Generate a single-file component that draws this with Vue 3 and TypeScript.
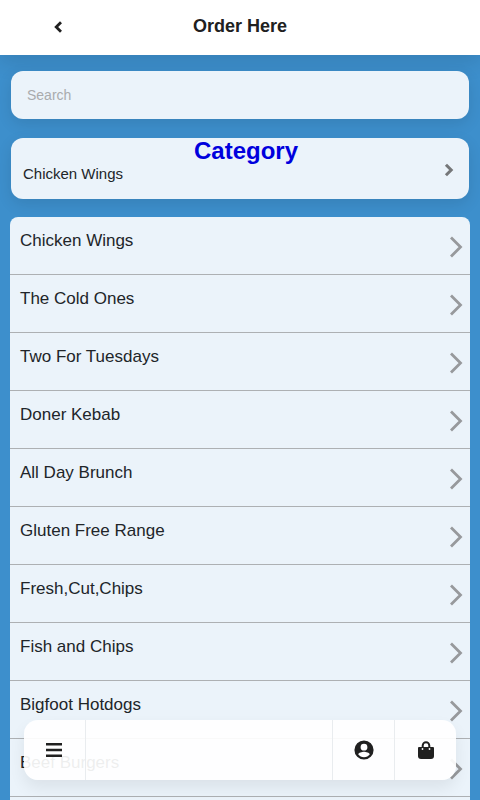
<script setup lang="ts">
import { ref } from 'vue'

const query = ref<string>('')
const selected = ref<string>('Chicken Wings')
const categories: string[] = [
  'Chicken Wings',
  'The Cold Ones',
  'Two For Tuesdays',
  'Doner Kebab',
  'All Day Brunch',
  'Gluten Free Range',
  'Fresh,Cut,Chips',
  'Fish and Chips',
  'Bigfoot Hotdogs',
  'Beef Burgers',
]
</script>

<template>
  <div class="page">
    <header class="top">
      <button class="back" type="button" aria-label="Back">
        <svg viewBox="0 0 12 16" width="12" height="16"><path d="M8 4.200 4.200 8 8 11.800" fill="none" stroke="#202020" stroke-width="2.800" stroke-linecap="square" /></svg>
      </button>
      <h1>Order Here</h1>
    </header>

    <main>
      <input v-model="query" class="search" type="text" placeholder="Search" aria-label="Search" />

      <section class="current">
        <h2>Category</h2>
        <button class="picker" type="button">
          <span>{{ selected }}</span>
          <svg viewBox="0 0 12 14" width="12" height="14"><path d="M4 2.800 8.200 7 4 11.200" fill="none" stroke="#757779" stroke-width="3" stroke-linecap="square" /></svg>
        </button>
      </section>

      <ul class="list">
        <li v-for="name in categories" :key="name">
          <button class="row" type="button" @click="selected = name">
            <span>{{ name }}</span>
            <svg viewBox="0 0 14 22" width="14" height="22"><path d="M2 1.500 11.500 11 2 20.500" fill="none" stroke="#97999c" stroke-width="2.800" /></svg>
          </button>
        </li>
      </ul>
    </main>

    <nav class="dock">
      <button type="button" aria-label="Menu">
        <svg viewBox="0 0 16 14" width="16" height="14"><path d="M0 1.300h16M0 7h16M0 12.700h16" stroke="#202020" stroke-width="2.600" /></svg>
      </button>
      <span class="gap"></span>
      <button type="button" aria-label="Account">
        <svg viewBox="0 0 20 20" width="20" height="20" fill="#202020"><path fill-rule="evenodd" d="M10 .4a9.600 9.600 0 1 0 0 19.200A9.600 9.600 0 0 0 10 .4Zm0 3.400a3.400 3.400 0 1 1 0 6.800 3.400 3.400 0 0 1 0-6.800Zm0 13.400c-2.500 0-4.400-1.100-5.700-2.700.1-1.800 3.800-2.700 5.700-2.700s5.600.9 5.700 2.700c-1.300 1.600-3.200 2.700-5.700 2.700Z" /></svg>
      </button>
      <button type="button" aria-label="Bag">
        <svg viewBox="0 0 16 18" width="16" height="18"><path d="M4.700 8V4.500a3.300 3.300 0 0 1 6.600 0V8" fill="none" stroke="#202020" stroke-width="2" /><path fill="#202020" d="M1 6h14a1 1 0 0 1 1 1v8a3 3 0 0 1-3 3H3a3 3 0 0 1-3-3V7a1 1 0 0 1 1-1Z" /><circle cx="4.500" cy="8" r=".9" fill="#fdfdfe" /><circle cx="11.500" cy="8" r=".9" fill="#fdfdfe" /></svg>
      </button>
    </nav>
  </div>
</template>

<style>
html {
  background: #3d8fcc;
  scrollbar-width: none;
}
</style>

<style scoped>
.page,
.page * {
  box-sizing: border-box;
}
.page {
  font-family: "Liberation Sans", Arial, sans-serif;
  color: #212529;
  background: #3d8fcc;
  min-height: 100vh;
}
button {
  font: inherit;
  color: inherit;
  border: 0;
  background: none;
  padding: 0;
  cursor: pointer;
}
svg {
  display: block;
  flex: none;
}
h1,
h2,
ul {
  margin: 0;
  padding: 0;
}
.top {
  display: grid;
  grid-template-columns: 1fr auto 1fr;
  align-items: start;
  height: 55px;
  padding-top: 14px;
  background: #fff;
  box-shadow: 0 8px 20px rgba(0, 0, 0, 0.1);
}
.back {
  justify-self: start;
  margin-left: 52px;
  padding-top: 5px;
}
h1 {
  font-size: 18px;
  line-height: 24px;
  color: #202020;
}
main {
  padding: 16px 10px 0;
}
.search,
.current {
  display: block;
  width: calc(100% - 2px);
  margin: 0 1px;
  border: 0;
  border-radius: 12px;
  background: #ebf3fa;
  box-shadow: 0 5px 15px rgba(0, 0, 0, 0.1);
}
.search {
  height: 48px;
  padding: 0 16px;
  font: 14px "Liberation Sans", Arial, sans-serif;
  outline: 0;
}
.search::placeholder {
  color: #a9abad;
  opacity: 1;
}
.current {
  margin-top: 19px;
  padding-bottom: 16px;
}
h2 {
  padding-left: 12px;
  font-size: 24px;
  line-height: 26px;
  text-align: center;
  color: #00d;
}
.picker {
  display: flex;
  align-items: center;
  justify-content: space-between;
  width: 100%;
  padding: 0 14px 0 12px;
  font-size: 15px;
  line-height: 19px;
}
.picker svg {
  margin-top: -8px;
}
.list {
  margin-top: 18px;
  padding-bottom: 20px;
  border-radius: 8px;
  overflow: hidden;
  background: #ebf3fa;
  list-style: none;
}
li {
  border-bottom: 1px solid #adb0b3;
}
.row {
  display: flex;
  justify-content: space-between;
  width: 100%;
  height: 57px;
  padding: 12px 7px 0 10px;
  font-size: 17px;
  line-height: 24px;
  text-align: left;
}
.row svg {
  margin-top: 7px;
}
.dock {
  position: fixed;
  right: 24px;
  bottom: 20px;
  left: 24px;
  display: flex;
  height: 60px;
  border-radius: 14px;
  background: rgba(255, 255, 255, 0.92);
  box-shadow: 0 8px 16px rgba(0, 0, 0, 0.07);
}
.dock button {
  display: grid;
  place-items: center;
  width: 62px;
  border-left: 1px solid #e9ecef;
}
.dock button:first-child {
  padding-right: 1px;
  border-left: 0;
  border-right: 1px solid #e9ecef;
}
.gap {
  flex: 1;
}
</style>
